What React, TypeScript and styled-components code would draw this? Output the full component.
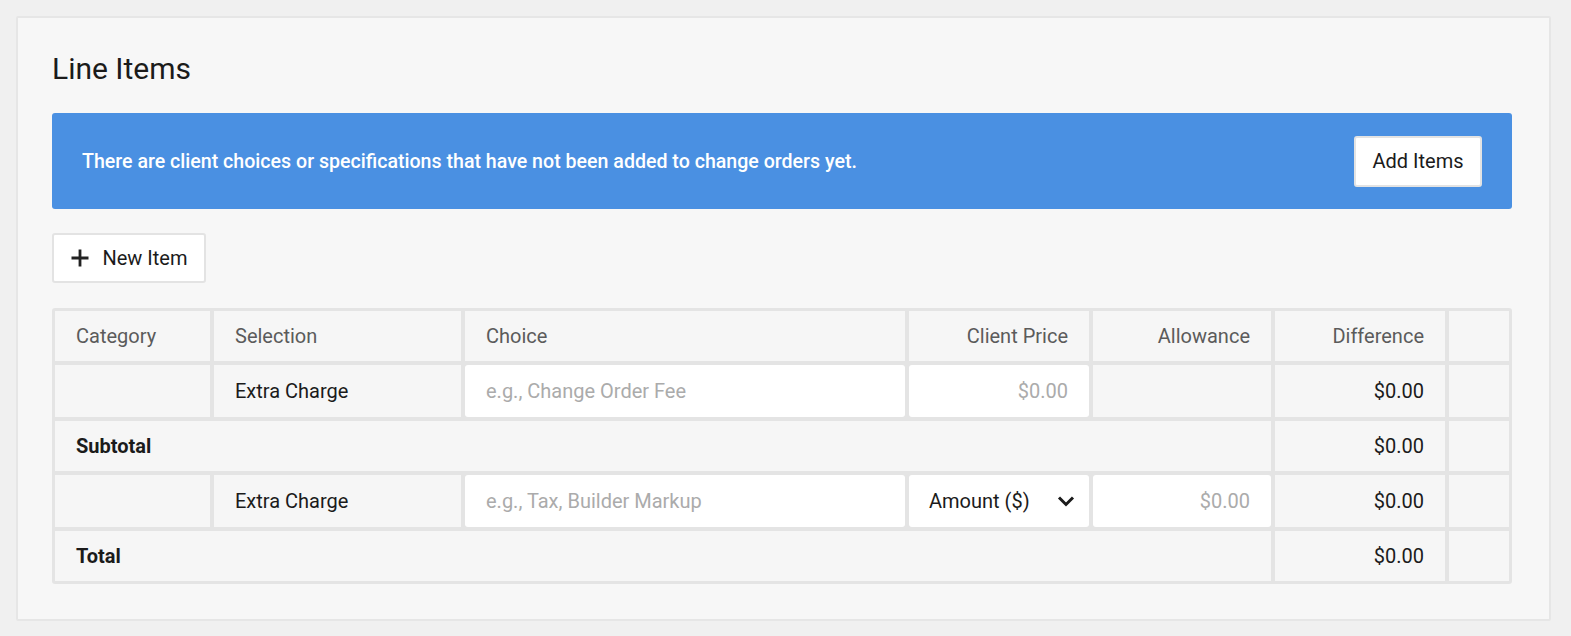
import React from "react";
import styled, { createGlobalStyle } from "styled-components";

const Global = createGlobalStyle`
  html, body { margin: 0; padding: 0; background: #f0f0f0; }
  body { font-family: Roboto, "Liberation Sans", Arial, sans-serif; color: #1b1b1b; }
  * { box-sizing: border-box; }
`;

const Page = styled.div`
  padding: 16px;
`;

const Card = styled.section`
  width: 1535px;
  height: 605px;
  background: #f7f7f7;
  border: 2px solid #e6e6e6;
  border-radius: 2px;
  padding: 33px 37px 0 34px;
  display: flex;
  flex-direction: column;
`;

const Title = styled.h2`
  margin: 0;
  font-size: 30px;
  line-height: 36px;
  font-weight: 400;
  color: #1b1b1b;
`;

const Banner = styled.div`
  margin-top: 26px;
  height: 96px;
  background: #4a90e2;
  border-radius: 3px;
  padding: 0 30px;
  display: flex;
  align-items: center;
  justify-content: space-between;
  color: #fff;
  font-size: 19.6px;
  font-weight: 500;
`;

const Button = styled.button<{ $h?: number; $w: number }>`
  display: inline-flex;
  align-items: center;
  justify-content: center;
  gap: 14px;
  height: ${(p) => p.$h ?? 51}px;
  width: ${(p) => p.$w}px;
  background: #fff;
  border: 2px solid #e3e3e3;
  border-radius: 3px;
  font-family: inherit;
  font-size: 20px;
  font-weight: 400;
  color: #1b1b1b;
  padding: 0;
  cursor: pointer;
`;

const Toolbar = styled.div`
  margin-top: 24px;
  display: flex;
`;

const Grid = styled.div`
  margin-top: 25px;
  width: 1460px;
  display: grid;
  grid-template-columns: 155px 247px 440px 180px 178px 170px 60px;
  grid-template-rows: 50px 52px 50px 52px 50px;
  gap: 4px;
  padding: 3px;
  background: #e4e4e4;
  border-radius: 3px;
`;

type CellProps = {
  $align?: "left" | "right";
  $bold?: boolean;
  $head?: boolean;
  $white?: boolean;
  $muted?: boolean;
  $span?: number;
};

const Cell = styled.div<CellProps>`
  display: flex;
  align-items: center;
  justify-content: ${(p) => (p.$align === "right" ? "flex-end" : "flex-start")};
  padding: 0 21px;
  background: ${(p) => (p.$white ? "#fff" : "#f6f6f6")};
  border-radius: ${(p) => (p.$white ? "3px" : "0")};
  font-size: 20px;
  font-weight: ${(p) => (p.$bold ? 700 : 400)};
  color: ${(p) => (p.$head ? "#5b5b5b" : p.$muted ? "#ababab" : "#1b1b1b")};
  grid-column: ${(p) => (p.$span ? `span ${p.$span}` : "auto")};
  white-space: nowrap;
`;

const SelectCell = styled(Cell)`
  justify-content: space-between;
  padding: 0 14px 0 20px;
`;

const Plus = () => (
  <svg width="18" height="18" viewBox="0 0 18 18" aria-hidden>
    <path d="M9 0.5v17M0.5 9h17" stroke="#222" strokeWidth="2.8" />
  </svg>
);

const Chevron = () => (
  <svg width="18" height="12" viewBox="0 0 18 12" aria-hidden>
    <path d="M2 2.5l7 7 7-7" stroke="#1b1b1b" strokeWidth="3" fill="none" />
  </svg>
);

export default function App() {
  return (
    <>
      <Global />
      <Page>
        <Card>
          <Title>Line Items</Title>
          <Banner>
            <span>There are client choices or specifications that have not been added to change orders yet.</span>
            <Button $w={128}>Add Items</Button>
          </Banner>
          <Toolbar>
            <Button $w={154} $h={50}>
              <Plus />
              New Item
            </Button>
          </Toolbar>
          <Grid>
            <Cell $head>Category</Cell>
            <Cell $head>Selection</Cell>
            <Cell $head>Choice</Cell>
            <Cell $head $align="right">Client Price</Cell>
            <Cell $head $align="right">Allowance</Cell>
            <Cell $head $align="right">Difference</Cell>
            <Cell />

            <Cell />
            <Cell>Extra Charge</Cell>
            <Cell $white $muted>e.g., Change Order Fee</Cell>
            <Cell $white $muted $align="right">$0.00</Cell>
            <Cell />
            <Cell $align="right">$0.00</Cell>
            <Cell />

            <Cell $bold $span={5}>Subtotal</Cell>
            <Cell $align="right">$0.00</Cell>
            <Cell />

            <Cell />
            <Cell>Extra Charge</Cell>
            <Cell $white $muted>e.g., Tax, Builder Markup</Cell>
            <SelectCell $white>
              Amount ($)
              <Chevron />
            </SelectCell>
            <Cell $white $muted $align="right">$0.00</Cell>
            <Cell $align="right">$0.00</Cell>
            <Cell />

            <Cell $bold $span={5}>Total</Cell>
            <Cell $align="right">$0.00</Cell>
            <Cell />
          </Grid>
        </Card>
      </Page>
    </>
  );
}
